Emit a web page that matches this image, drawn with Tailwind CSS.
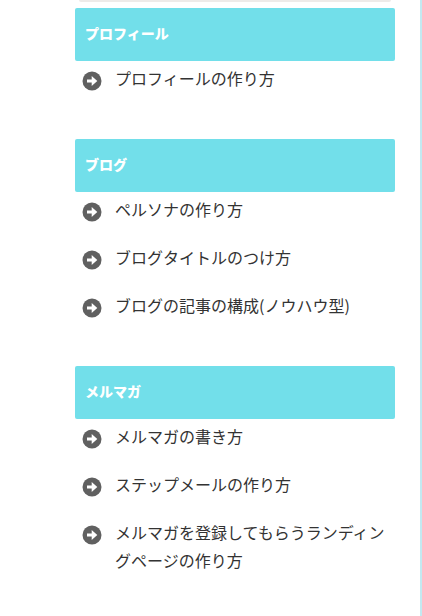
<!DOCTYPE html>
<html lang="ja">
<head>
<meta charset="utf-8">
<meta name="viewport" content="width=device-width, initial-scale=1">
<title>メニュー</title>
<script src="https://cdn.jsdelivr.net/npm/@tailwindcss/browser@4"></script>
</head>
<body class="min-h-screen border-r-2 border-[#c3e9f1] bg-white font-['Noto_Sans_CJK_JP',sans-serif] text-base text-[#333]">
<svg class="hidden" aria-hidden="true">
  <symbol id="arrow" viewBox="0 0 20 20">
    <circle cx="10" cy="10" r="9.5" fill="#606060"/>
    <path d="M5 8.4h4.7V5L15.3 10l-5.6 5v-3.4H5z" fill="#fff"/>
  </symbol>
</svg>
<aside class="pr-[25px] pl-[75px]">
  <div class="mx-1 mb-1.5 h-0.5 rounded-b bg-[#eeebe9]"></div>
  <nav class="flex flex-col gap-[47px]">
    <section>
      <h2 class="mb-[3px] rounded-xs bg-[#72dfea] px-2.5 pt-[15px] pb-[17px] text-sm leading-[21px] font-black text-white">プロフィール</h2>
      <ul class="flex flex-col gap-5 px-[7px] leading-7">
        <li><a href="#" class="flex gap-[13px]"><svg class="mt-[7px] size-5 shrink-0"><use href="#arrow"/></svg><span>プロフィールの作り方</span></a></li>
      </ul>
    </section>
    <section>
      <h2 class="mb-[3px] rounded-xs bg-[#72dfea] px-2.5 pt-[15px] pb-[17px] text-sm leading-[21px] font-black text-white">ブログ</h2>
      <ul class="flex flex-col gap-5 px-[7px] leading-7">
        <li><a href="#" class="flex gap-[13px]"><svg class="mt-[7px] size-5 shrink-0"><use href="#arrow"/></svg><span>ペルソナの作り方</span></a></li>
        <li><a href="#" class="flex gap-[13px]"><svg class="mt-[7px] size-5 shrink-0"><use href="#arrow"/></svg><span>ブログタイトルのつけ方</span></a></li>
        <li><a href="#" class="flex gap-[13px]"><svg class="mt-[7px] size-5 shrink-0"><use href="#arrow"/></svg><span>ブログの記事の構成(ノウハウ型)</span></a></li>
      </ul>
    </section>
    <section>
      <h2 class="mb-[3px] rounded-xs bg-[#72dfea] px-2.5 pt-[15px] pb-[17px] text-sm leading-[21px] font-black text-white">メルマガ</h2>
      <ul class="flex flex-col gap-5 px-[7px] leading-7">
        <li><a href="#" class="flex gap-[13px]"><svg class="mt-[7px] size-5 shrink-0"><use href="#arrow"/></svg><span>メルマガの書き方</span></a></li>
        <li><a href="#" class="flex gap-[13px]"><svg class="mt-[7px] size-5 shrink-0"><use href="#arrow"/></svg><span>ステップメールの作り方</span></a></li>
        <li><a href="#" class="flex gap-[13px]"><svg class="mt-[7px] size-5 shrink-0"><use href="#arrow"/></svg><span>メルマガを登録してもらうランディングページの作り方</span></a></li>
      </ul>
    </section>
  </nav>
</aside>
</body>
</html>
